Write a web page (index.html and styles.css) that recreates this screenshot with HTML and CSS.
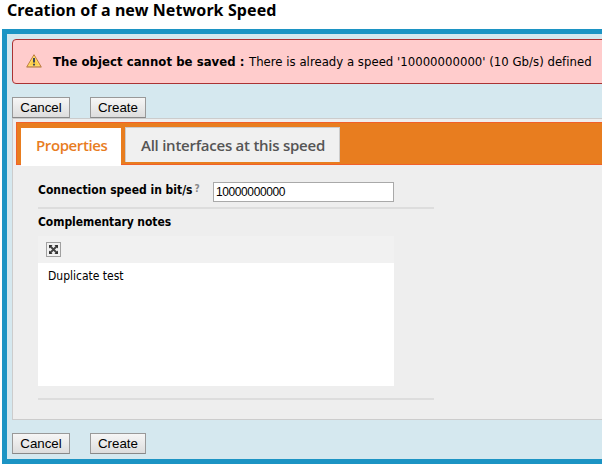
FILE: index.html
```
<!DOCTYPE html>
<html lang="en">
<head>
<meta charset="utf-8">
<title>Creation of a new Network Speed</title>
<link rel="stylesheet" href="styles.css">
</head>
<body>
<h1><span>Creation of a new Network Speed</span></h1>
<main class="wizard">
  <div class="alert">
    <svg class="warning" width="16" height="14" viewBox="0 0 16 14"><path d="M8 .7 15.2 12.8H.8Z" fill="#fbce4a" stroke="#bd7b45" stroke-linejoin="round"/><path d="M8 2.5 13.3 11.7H2.7Z" fill="none" stroke="#ffe27a" stroke-width=".7"/><path d="M7 4h2v4.5H7ZM7 9.7h2v1.8H7Z" fill="#3c465c"/><path d="M.5 13.4h15" stroke="#c99a70" stroke-width=".8"/></svg>
    <strong>The object cannot be saved :</strong>
    <span class="reason">There is already a speed '10000000000' (10 Gb/s) defined</span>
  </div>
  <div class="actions">
    <button class="cancel">Cancel</button>
    <button class="create">Create</button>
  </div>
  <section class="panel">
    <nav class="tabs">
      <a class="tab active"><span>Properties</span></a>
      <a class="tab other"><span>All interfaces at this speed</span></a>
    </nav>
    <form class="fields">
      <div class="field speed">
        <label><span class="label-text">Connection speed in bit/s</span><span class="hint">?</span></label>
        <input type="text" value="10000000000">
      </div>
      <div class="field notes">
        <label><span>Complementary notes</span></label>
        <div class="editor">
          <div class="toolbar">
            <span class="maximize"><svg width="11" height="11" viewBox="0 0 11 11"><path d="m2 2 7 7M9 2 2 9" stroke="#444" stroke-width="1.8"/><path d="M1 1h3.6L1 4.6ZM10 1v3.6L6.4 1ZM1 10V6.4L4.6 10ZM10 10H6.4L10 6.4Z" fill="#333"/></svg></span>
          </div>
          <div class="content"><span>Duplicate test</span></div>
        </div>
      </div>
    </form>
  </section>
  <div class="actions bottom">
    <button class="cancel">Cancel</button>
    <button class="create">Create</button>
  </div>
</main>
</body>
</html>
```
FILE: styles.css
```
* { box-sizing: border-box; }
body {
  margin: 0;
  height: 468px;
  overflow: hidden;
  background: #fff;
  color: #000;
  font-family: "DejaVu Sans Condensed", "DejaVu Sans", sans-serif;
  font-stretch: condensed;
  white-space: nowrap;
}
h1 {
  margin: 0;
  height: 29px;
  padding-left: 7px;
  font: bold 16px/21px "Noto Sans", sans-serif;
  letter-spacing: .09px;
}
.wizard {
  margin-left: 2px;
  height: 435px;
  border: solid #1c94c4;
  border-width: 5px 0 5px 5px;
  background: #d5e8ef;
  padding: 5px 0 0 5px;
}
.alert {
  display: flex;
  align-items: center;
  height: 45px;
  margin-right: -8px;
  padding-left: 13px;
  border: 1px solid #a33;
  border-radius: 4px;
  background: #fcc;
  font-size: 13px;
}
.warning { flex: none; margin: 0 11px 1px 0; }
.alert strong { width: 196px; flex: none; letter-spacing: .04px; }
.reason { letter-spacing: .02px; }
.actions { display: flex; gap: 20px; padding-top: 13px; }
.actions button {
  height: 21px;
  padding: 0;
  border: 1px solid #999;
  border-bottom-color: #888;
  background: linear-gradient(#f6f6f6, #ddd);
  font: 13.33px/18px "Liberation Sans", sans-serif;
  color: #000;
}
.cancel { width: 58px; }
.create { width: 56px; }
.panel {
  height: 302px;
  border: solid #ccc;
  border-width: 1px 0 1px 1px;
  background: #eee;
  padding: 3px 0 0 3px;
}
.tabs {
  display: flex;
  gap: 4px;
  height: 43px;
  padding: 4px 0 0 4px;
  border: solid #f1602a;
  border-width: 1px 0 1px 1px;
  background: #e87d1f;
}
.tab {
  height: 35px;
  font: 600 15px/34px "Open Sans", sans-serif;
  letter-spacing: -.25px;
}
.active {
  width: 100px;
  height: 38px;
  margin-top: 1px;
  padding-left: 15px;
  background: #fff;
  color: #e87d1f;
  letter-spacing: -.4px;
}
.other {
  width: 215px;
  padding-left: 15px;
  border: solid #ccc;
  border-width: 1px 1px 0 1px;
  background: #f0f0f0;
  color: #555;
}
.fields { width: 418px; padding: 17px 0 0 22px; font-size: 12px; }
.field { border-bottom: 2px solid #ddd; }
.field label { font-weight: bold; line-height: 16px; }
.speed { display: flex; height: 27px; }
.speed label { width: 175px; flex: none; }
.hint { color: #888; font-size: 10px; position: relative; top: -2px; margin-left: 2px; }
.speed input {
  width: 181px;
  height: 20px;
  padding: 0 2px;
  border: 1px solid #a9a9a9;
  background: #fff;
  font: 12px "Liberation Sans", sans-serif;
  letter-spacing: -.4px;
}
.notes { height: 191px; padding-top: 5px; }
.notes label { display: block; height: 22px; letter-spacing: -.06px; }
.editor { width: 356px; height: 150px; background: #fff; }
.toolbar { height: 27px; padding: 6px 0 0 8px; background: #f1f1f1; }
.maximize {
  display: grid;
  place-items: center;
  width: 15px;
  height: 15px;
  border: 1px solid #a0a0a0;
}
.content { padding: 5px 0 0 10px; line-height: 16px; }
.bottom { padding-top: 13px; }
```
